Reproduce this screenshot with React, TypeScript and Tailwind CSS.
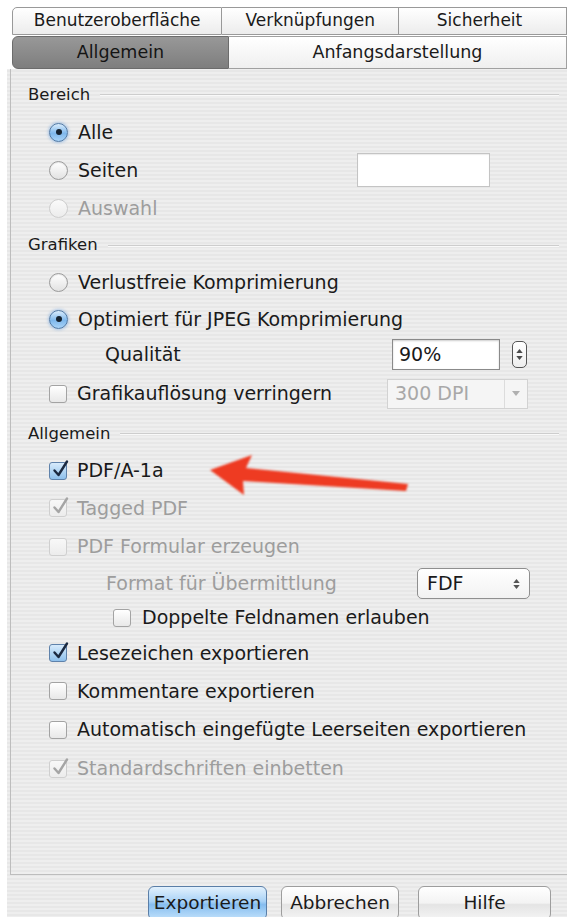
import type { ReactNode } from "react";

type RadioState = "on" | "off" | "disabled";

function Radio({ state }: { state: RadioState }) {
  if (state === "on") {
    return (
      <span className="flex h-[19px] w-[19px] shrink-0 items-center justify-center rounded-full border border-[#4f79a6] bg-[linear-gradient(180deg,#d9ecfc_0%,#7fb8ec_55%,#a9d3f7_100%)] shadow-[0_0_3px_1px_rgba(90,150,220,0.45)]">
        <span className="h-[6px] w-[6px] rounded-full bg-[#16222f]" />
      </span>
    );
  }
  if (state === "disabled") {
    return (
      <span className="h-[19px] w-[19px] shrink-0 rounded-full border border-[#cdcdcd] bg-[linear-gradient(180deg,#fafafa,#ececec)]" />
    );
  }
  return (
    <span className="h-[19px] w-[19px] shrink-0 rounded-full border border-[#9b9b9b] bg-[linear-gradient(180deg,#ffffff,#e2e2e2)] shadow-[inset_0_1px_1px_rgba(0,0,0,0.1)]" />
  );
}

function Check({ checked = false, disabled = false }: { checked?: boolean; disabled?: boolean }) {
  let box = "border-[#a3a3a3] bg-[linear-gradient(180deg,#ffffff,#e8e8e8)]";
  if (checked && !disabled) box = "border-[#5f82ab] bg-[linear-gradient(180deg,#d7ebfc,#8ec0ec)]";
  if (disabled) box = "border-[#cfcfcf] bg-[linear-gradient(180deg,#f8f8f8,#ececec)]";
  return (
    <span className={`relative h-[18px] w-[18px] shrink-0 rounded-[3px] border ${box}`}>
      {checked && (
        <svg
          viewBox="0 0 20 20"
          className="absolute left-[1px] top-[-4px] h-[20px] w-[20px] overflow-visible"
          fill="none"
        >
          <path
            d="M3.5 11.5 L7.5 16 L16 2.5"
            stroke={disabled ? "#a5a5a5" : "#1b2940"}
            strokeWidth="2.4"
            strokeLinecap="round"
            strokeLinejoin="round"
          />
        </svg>
      )}
    </span>
  );
}

function Section({ title, h }: { title: string; h: string }) {
  return (
    <div className={`flex items-center pl-[17px] pr-[8px] text-[16.5px] ${h}`}>
      <span>{title}</span>
      <span className="ml-[10px] h-[2px] flex-1 border-t border-b border-t-[#cdcdcd] border-b-[#f9f9f9]" />
    </div>
  );
}

function Row({ h, children }: { h: string; children: ReactNode }) {
  return <div className={`flex items-center ${h}`}>{children}</div>;
}

function Item({ control, label, muted = false }: { control: ReactNode; label: string; muted?: boolean }) {
  return (
    <div className="flex items-center gap-[10px] pl-[38px]">
      {control}
      <span className={muted ? "text-[#9d9d9d]" : ""}>{label}</span>
    </div>
  );
}

function Button({ label, primary = false, w }: { label: string; primary?: boolean; w: string }) {
  const look = primary
    ? "border-[#5a7ea7] bg-[linear-gradient(180deg,#e2f1fd_0%,#a9d2f6_45%,#86bdef_55%,#bfe0fb_100%)]"
    : "border-[#9d9d9d] bg-[linear-gradient(180deg,#ffffff_0%,#f3f3f3_50%,#e4e4e4_55%,#f4f4f4_100%)]";
  return (
    <div className={`flex h-[34px] items-center justify-center rounded-[6px] border text-[18.5px] ${look} ${w}`}>
      {label}
    </div>
  );
}

export default function App() {
  return (
    <div className="relative h-[917px] w-[567px] overflow-hidden bg-white font-['DejaVu_Sans',sans-serif] text-[19px] text-[#1a1a1a]">
      <div className="ml-[7px] flex h-full flex-col bg-[image:repeating-linear-gradient(180deg,#eeeeee_0px,#eeeeee_2px,#e7e7e7_2px,#e7e7e7_4px)]">
        {/* tab strip */}
        <div className="bg-white pl-[5px] pt-[7px]">
          <div className="flex h-[28px] text-[17px]">
            <div className="flex w-[213px] items-center justify-center rounded-tl-[5px] border border-[#999999] bg-[linear-gradient(180deg,#ffffff,#ececec)]">
              Benutzeroberfläche
            </div>
            <div className="flex w-[179px] items-center justify-center border-y border-r border-[#999999] bg-[linear-gradient(180deg,#ffffff,#ececec)]">
              Verknüpfungen
            </div>
            <div className="flex w-[170px] items-center justify-center border-y border-r border-[#999999] bg-[linear-gradient(180deg,#ffffff,#ececec)] pr-[6px]">
              Sicherheit
            </div>
          </div>
          <div className="mt-[1px] flex h-[33px] text-[17.5px]">
            <div className="flex w-[220px] items-center justify-center rounded-l-[6px] border border-[#6c6c6c] bg-[linear-gradient(180deg,#989898,#7e7e7e)] text-[#141414]">
              Allgemein
            </div>
            <div className="flex w-[343px] items-center justify-center border-y border-r border-[#a0a0a0] bg-[linear-gradient(180deg,#ffffff,#efefef)]">
              Anfangsdarstellung
            </div>
          </div>
        </div>

        {/* options panel */}
        <div className="ml-[3px] flex flex-1 flex-col border-b border-l border-[#bdbdbd] pt-[8px]">
          <Section title="Bereich" h="h-[36px]" />
          <Row h="h-[38px]">
            <Item control={<Radio state="on" />} label="Alle" />
          </Row>
          <Row h="h-[38px]">
            <div className="flex-1">
              <Item control={<Radio state="off" />} label="Seiten" />
            </div>
            <div className="mr-[77px] h-[34px] w-[133px] border border-[#c4c4c4] bg-white shadow-[inset_0_1px_1px_rgba(0,0,0,0.08)]" />
          </Row>
          <Row h="h-[38px]">
            <Item control={<Radio state="disabled" />} label="Auswahl" muted />
          </Row>
          <Section title="Grafiken" h="h-[37px]" />
          <Row h="h-[37px]">
            <Item control={<Radio state="off" />} label="Verlustfreie Komprimierung" />
          </Row>
          <Row h="h-[36px]">
            <Item control={<Radio state="on" />} label="Optimiert für JPEG Komprimierung" />
          </Row>
          <Row h="h-[34px]">
            <span className="flex-1 pl-[94px]">Qualität</span>
            <div className="flex h-[31px] w-[108px] items-center border border-[#8a8a8a] bg-white pl-[6px] shadow-[inset_0_1px_2px_rgba(0,0,0,0.2)]">
              90%
            </div>
            <div className="ml-[12px] mr-[40px] flex h-[27px] w-[15px] flex-col items-center justify-center gap-[3px] rounded-[5px] border border-[#555555] bg-[linear-gradient(180deg,#ffffff,#eeeeee)]">
              <svg viewBox="0 0 8 5" className="h-[4px] w-[7px]">
                <path d="M4 0 L8 5 L0 5 Z" fill="#4a4a4a" />
              </svg>
              <svg viewBox="0 0 8 5" className="h-[4px] w-[7px]">
                <path d="M0 0 L8 0 L4 5 Z" fill="#4a4a4a" />
              </svg>
            </div>
          </Row>
          <Row h="h-[45px]">
            <div className="flex-1">
              <Item control={<Check />} label="Grafikauflösung verringern" />
            </div>
            <div className="mr-[39px] flex h-[30px] w-[141px] items-center border border-[#d2d2d2] bg-[#f5f5f5] text-[#a8a8a8]">
              <span className="flex-1 pl-[7px]">300 DPI</span>
              <span className="flex h-full w-[23px] items-center justify-center border-l border-[#dcdcdc]">
                <svg viewBox="0 0 8 5" className="h-[5px] w-[8px]">
                  <path d="M0 0 L8 0 L4 5 Z" fill="#b0b0b0" />
                </svg>
              </span>
            </div>
          </Row>
          <Section title="Allgemein" h="h-[36px]" />
          <Row h="h-[37px]">
            <Item control={<Check checked />} label="PDF/A-1a" />
          </Row>
          <Row h="h-[38px]">
            <Item control={<Check checked disabled />} label="Tagged PDF" muted />
          </Row>
          <Row h="h-[39px]">
            <Item control={<Check disabled />} label="PDF Formular erzeugen" muted />
          </Row>
          <Row h="h-[35px]">
            <span className="flex-1 pl-[95px] text-[#9d9d9d]">Format für Übermittlung</span>
            <div className="mr-[37px] flex h-[31px] w-[113px] items-center rounded-[5px] border border-[#8f8f8f] bg-[linear-gradient(180deg,#ffffff,#f2f2f2)] pl-[9px] pr-[9px]">
              <span className="flex-1 text-[#1a1a1a]">FDF</span>
              <span className="flex flex-col gap-[2px]">
                <svg viewBox="0 0 8 5" className="h-[4px] w-[7px]">
                  <path d="M4 0 L8 5 L0 5 Z" fill="#555555" />
                </svg>
                <svg viewBox="0 0 8 5" className="h-[4px] w-[7px]">
                  <path d="M0 0 L8 0 L4 5 Z" fill="#555555" />
                </svg>
              </span>
            </div>
          </Row>
          <Row h="h-[33px]">
            <div className="flex items-center gap-[11px] pl-[102px]">
              <Check />
              <span>Doppelte Feldnamen erlauben</span>
            </div>
          </Row>
          <Row h="h-[38px]">
            <Item control={<Check checked />} label="Lesezeichen exportieren" />
          </Row>
          <Row h="h-[38px]">
            <Item control={<Check />} label="Kommentare exportieren" />
          </Row>
          <Row h="h-[39px]">
            <Item control={<Check />} label="Automatisch eingefügte Leerseiten exportieren" />
          </Row>
          <Row h="h-[39px]">
            <Item control={<Check checked disabled />} label="Standardschriften einbetten" muted />
          </Row>
        </div>

        {/* dialog buttons */}
        <div className="flex h-[42px] shrink-0 pl-[141px] pt-[11px]">
          <Button label="Exportieren" primary w="w-[119px]" />
          <div className="ml-[14px]">
            <Button label="Abbrechen" w="w-[118px]" />
          </div>
          <div className="ml-[19px]">
            <Button label="Hilfe" w="w-[133px]" />
          </div>
        </div>
      </div>

      {/* red annotation arrow */}
      <svg className="pointer-events-none absolute left-0 top-0 h-[917px] w-[567px]" viewBox="0 0 567 917">
        <defs>
          <filter id="soft" x="-10%" y="-20%" width="120%" height="140%">
            <feGaussianBlur stdDeviation="0.9" />
          </filter>
        </defs>
        <polygon
          points="210,470 252,455 246,468 408,484 406,491 243,481 244,495"
          fill="#ee3a22"
          filter="url(#soft)"
        />
      </svg>
    </div>
  );
}
